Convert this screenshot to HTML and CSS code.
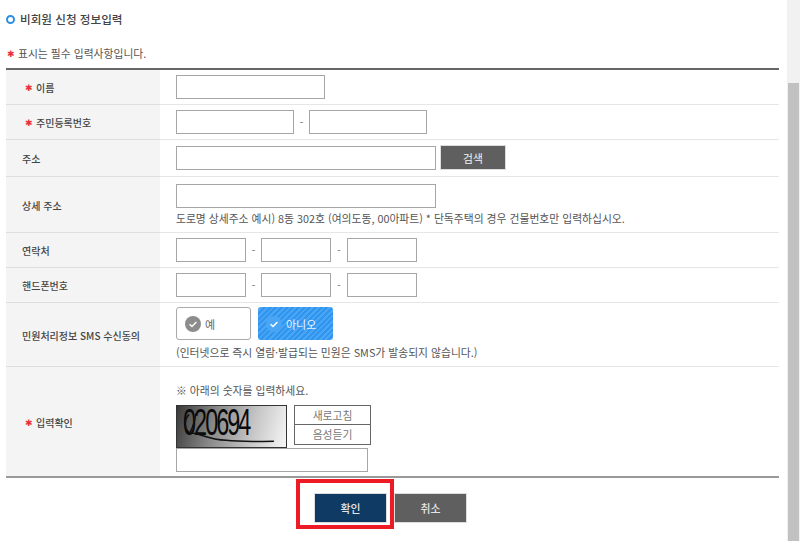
FILE: index.html
```html
<!DOCTYPE html>
<html lang="ko">
<head>
<meta charset="utf-8">
<title>비회원 신청 정보입력</title>
<link rel="stylesheet" href="styles.css">
</head>
<body>
<div class="page">
  <main class="content">
    <h2 class="title"><span class="ring"></span>비회원 신청 정보입력</h2>
    <p class="note"><span class="star">✱</span>표시는 필수 입력사항입니다.</p>
    <table class="form">
      <tbody>
        <tr class="r1">
          <th class="req"><span class="star">✱</span>이름</th>
          <td><input class="inp w149" type="text"></td>
        </tr>
        <tr class="r2">
          <th class="req"><span class="star">✱</span>주민등록번호</th>
          <td><div class="line"><input class="inp w118" type="text"><span class="dash">-</span><input class="inp w118" type="text"></div></td>
        </tr>
        <tr class="r3">
          <th>주소</th>
          <td><div class="line tight"><input class="inp w260" type="text"><button class="btn-search" type="button">검색</button></div></td>
        </tr>
        <tr class="r4">
          <th>상세 주소</th>
          <td><input class="inp w260 block" type="text"><p class="hint">도로명 상세주소 예시) 8동 302호 (여의도동, 00아파트) * 단독주택의 경우 건물번호만 입력하십시오.</p></td>
        </tr>
        <tr class="r5">
          <th>연락처</th>
          <td><div class="line"><input class="inp w70" type="text"><span class="dash">-</span><input class="inp w70" type="text"><span class="dash wide">-</span><input class="inp w70" type="text"></div></td>
        </tr>
        <tr class="r6">
          <th>핸드폰번호</th>
          <td><div class="line"><input class="inp w70" type="text"><span class="dash">-</span><input class="inp w70" type="text"><span class="dash wide">-</span><input class="inp w70" type="text"></div></td>
        </tr>
        <tr class="r7">
          <th>민원처리정보 SMS 수신동의</th>
          <td>
            <div class="choices">
              <div class="choice off">
                <svg class="check" viewBox="0 0 16 16"><circle cx="8" cy="8" r="8" fill="#8c8c8c"/><path d="M4.6 8.2l2.4 2.4 4.4-4.6" fill="none" stroke="#fff" stroke-width="1.4"/></svg>예
              </div>
              <div class="choice on">
                <svg class="check" viewBox="0 0 16 16"><circle cx="8" cy="8" r="8" fill="#4aa5f5"/><path d="M4.6 8.2l2.4 2.4 4.4-4.6" fill="none" stroke="#fff" stroke-width="1.4"/></svg>아니오
              </div>
            </div>
            <p class="hint">(인터넷으로 즉시 열람·발급되는 민원은 SMS가 발송되지 않습니다.)</p>
          </td>
        </tr>
        <tr class="r8">
          <th class="req"><span class="star">✱</span>입력확인</th>
          <td>
            <p class="hint top">※ 아래의 숫자를 입력하세요.</p>
            <div class="captcha-row">
              <div class="captcha">
                <span class="digits">020694</span>
                <svg class="scrawl" viewBox="0 0 111 43"><path d="M11 9C5 15 6 25 12 28M18 8C17 17 14 24 12 28C24 29 30 35 50 36C66 38 85 37 100 37" fill="none" stroke="#111" stroke-width="1.6"/></svg>
              </div>
              <div class="captcha-btns">
                <button class="btn-line" type="button">새로고침</button>
                <button class="btn-line" type="button">음성듣기</button>
              </div>
            </div>
            <input class="inp w192 block" type="text">
          </td>
        </tr>
      </tbody>
    </table>
    <div class="actions">
      <button class="btn confirm" type="button">확인<span class="mark"></span></button>
      <button class="btn cancel" type="button">취소</button>
    </div>
  </main>
  <aside class="scrollbar"><div class="thumb"></div></aside>
</div>
</body>
</html>
```

FILE: styles.css
```css
* { box-sizing: border-box; }
html, body { margin: 0; padding: 0; height: 541px; overflow: hidden; background: #fff; }
body {
  font-family: "Noto Sans CJK KR", "Noto Sans", sans-serif;
  font-size: 10px;
  color: #555;
}
.page { display: flex; width: 800px; height: 541px; }
.content { width: 787px; padding-left: 6px; flex: none; }

.title {
  display: flex;
  align-items: center;
  gap: 5px;
  height: 14px;
  margin: 12px 0 0;
  font-size: 11.6px;
  font-weight: 500;
  color: #444;
}
.ring {
  width: 9px;
  height: 9px;
  border: 2.5px solid #2b8fe6;
  border-radius: 50%;
}
.note { margin: 20px 0 0 1px; height: 14px; line-height: 14px; font-size: 10.8px; color: #555; }
.star {
  display: inline-block;
  width: 11px;
  line-height: 1;
  color: #e8303c;
  font-family: "DejaVu Sans", sans-serif;
  font-size: 9px;
  vertical-align: 1px;
}

.form {
  width: 773px;
  margin-top: 8px;
  border-collapse: collapse;
  table-layout: fixed;
  border-top: 2px solid #666;
  border-bottom: 2px solid #999;
}
.form tr { border-bottom: 1px solid #e6e6e6; }
.form th {
  width: 154px;
  padding: 2px 0 0 16px;
  background: #f4f4f4;
  border-bottom: 1px solid #ddd;
  font-size: 10px;
  font-weight: 500;
  text-align: left;
  color: #444;
}
.form th.req { padding-left: 19px; }
.form td { padding: 0 0 0 16px; vertical-align: middle; }
.r1 { height: 35px; }
.r2 { height: 35px; }
.r3 { height: 37px; }
.r4 { height: 56px; }
.r5 { height: 35px; }
.r6 { height: 35px; }
.r7 { height: 64px; }
.r7 td { padding-bottom: 2px; }
.r8 { height: 111px; }
.r8 th { border-bottom: 0; }
.form .r8 td { border-bottom: 0; vertical-align: top; padding-top: 16px; }

.inp {
  display: inline-block;
  height: 24px;
  margin: 0;
  padding: 0;
  border: 1px solid #a6a6a6;
  background: #fff;
  vertical-align: top;
}
.block { display: block; }
.w149 { width: 149px; }
.w118 { width: 118px; }
.w260 { width: 260px; }
.w70 { width: 70px; }
.w192 { width: 192px; }

.line { display: flex; align-items: center; }
.line.tight { gap: 4px; }
.dash { width: 15px; text-align: center; font-size: 10px; color: #666; }
.dash.wide { width: 16px; }

.btn-search {
  width: 66px;
  height: 25px;
  padding: 0;
  border: 1px solid #ddd;
  background: #5f5f5f;
  color: #ddd;
  font: 500 10.8px "Noto Sans CJK KR", sans-serif;
}
.hint { margin: 3px 0 0; height: 14px; line-height: 14px; font-size: 10.8px; color: #555; white-space: nowrap; }
.r7 .hint { margin-top: 5px; }
.form .hint.top { margin: 0 0 8px; }

.choices { display: flex; gap: 7px; }
.choice {
  display: flex;
  align-items: center;
  gap: 4px;
  width: 75px;
  height: 33px;
  padding-left: 8px;
  border-radius: 3px;
  font-size: 11px;
}
.choice.off { border: 1px solid #aaa; color: #666; background: #fff; }
.choice.on {
  color: #e8f3fe;
  background: repeating-linear-gradient(135deg, #2f95ef 0 2px, #4aa5f5 2px 4px);
}
.check { width: 16px; height: 16px; flex: none; }

.captcha-row { display: flex; gap: 7px; }
.captcha {
  position: relative;
  width: 111px;
  height: 43px;
  border: 1px solid #333;
  background: linear-gradient(105deg, #3a3a3a 0%, #8a8a8a 35%, #c8c8c8 70%, #f6f6f6 100%);
}
.digits {
  position: absolute;
  left: 6px;
  top: 0;
  font: 36px/34px "Liberation Sans", sans-serif;
  letter-spacing: -3px;
  color: #0a0a0a;
  transform: scaleX(.65);
  transform-origin: left center;
}
.scrawl { position: absolute; inset: 0; width: 100%; height: 100%; }
.captcha-btns { display: flex; flex-direction: column; }
.btn-line {
  width: 77px;
  height: 20px;
  padding: 0;
  border: 1px solid #666;
  background: #fff;
  color: #777;
  font: 10.8px/16px "Noto Sans CJK KR", sans-serif;
}
.btn-line + .btn-line { margin-top: -1px; height: 21px; }

.actions { display: flex; justify-content: center; gap: 7px; margin-top: 15px; padding-right: 4px; width: 773px; }
.btn {
  width: 73px;
  height: 30px;
  padding: 0;
  border: 1px solid #ddd;
  color: #e6e6e6;
  font: 500 10.8px "Noto Sans CJK KR", sans-serif;
}
.confirm { position: relative; background: #0e3a63; }
.cancel { background: #5f5f5f; }
.mark {
  position: absolute;
  left: -19px;
  top: -15px;
  width: 98px;
  height: 50px;
  border: 4px solid #ed1c24;
}

.scrollbar { flex: 1; background: #f1f1f1; padding: 83px 1px 0; }
.thumb { height: 458px; background: #c1c1c1; }
```
